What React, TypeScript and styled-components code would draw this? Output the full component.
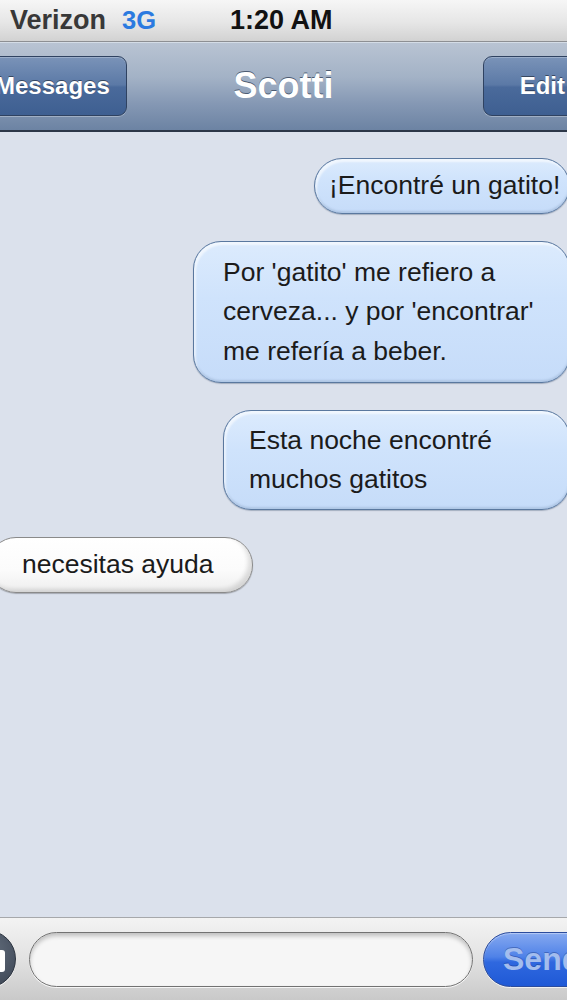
import React from "react";
import styled, { createGlobalStyle } from "styled-components";

const GlobalStyle = createGlobalStyle`
  html, body { margin: 0; padding: 0; }
  body {
    overflow: hidden;
    background: #dbe1ec;
    font-family: "Liberation Sans", Arial, Helvetica, sans-serif;
  }
`;

const Screen = styled.div`
  width: 567px;
  height: 1000px;
  display: flex;
  flex-direction: column;
  overflow: hidden;
  background: #dbe1ec;
`;

const StatusBar = styled.div`
  height: 41px;
  flex: none;
  display: flex;
  align-items: center;
  padding-left: 10px;
  background: linear-gradient(to bottom, #f6f6f6 0%, #e6e6e6 55%, #d2d2d2 100%);
  border-bottom: 1px solid #8d8f93;
  font-weight: bold;
`;

const Carrier = styled.span`
  font-size: 27px;
  color: #383838;
`;

const Network = styled.span`
  font-size: 25.5px;
  color: #2b7ae0;
  margin-left: 16px;
`;

const Clock = styled.span`
  font-size: 27px;
  color: #111;
  margin-left: 74px;
`;

const NavBar = styled.div`
  height: 88px;
  flex: none;
  display: grid;
  grid-template-columns: 1fr auto 1fr;
  align-items: center;
  background: linear-gradient(to bottom, #b9c4d3 0%, #a3b2c6 40%, #8598b4 70%, #6c83a3 100%);
  border-bottom: 2px solid #2c3748;
  box-shadow: inset 0 1px 0 #d4dce6;
`;

const NavButton = styled.div<{ $side: "left" | "right" }>`
  justify-self: ${(p) => (p.$side === "left" ? "start" : "end")};
  margin-left: ${(p) => (p.$side === "left" ? "-24px" : "0")};
  margin-right: ${(p) => (p.$side === "right" ? "-30px" : "0")};
  height: 58px;
  display: flex;
  align-items: center;
  padding: ${(p) => (p.$side === "left" ? "0 16px 0 18px" : "0 31px 0 36px")};
  border: 1px solid #2f4261;
  border-radius: 9px;
  background: linear-gradient(to bottom, #7a93b8 0%, #5b79a6 48%, #4a6a9b 52%, #3e5f91 100%);
  box-shadow: inset 0 1px 0 rgba(255, 255, 255, 0.25), 0 1px 0 rgba(255, 255, 255, 0.3);
  color: #fff;
  font-size: 24px;
  font-weight: bold;
  text-shadow: 0 -1px 0 rgba(0, 0, 0, 0.45);
`;

const Title = styled.div`
  color: #fff;
  font-size: 36px;
  font-weight: bold;
  text-shadow: 0 -1px 0 #4b5b72;
`;

const Conversation = styled.div`
  flex: 1;
  display: flex;
  flex-direction: column;
  gap: 27px;
  padding-top: 26px;
  background: #dbe1ec;
`;

const Bubble = styled.div<{ $mine?: boolean; $width: number; $pl: number; $py: number }>`
  box-sizing: border-box;
  width: ${(p) => p.$width}px;
  align-self: ${(p) => (p.$mine ? "flex-end" : "flex-start")};
  margin-right: ${(p) => (p.$mine ? "-3px" : "0")};
  margin-left: ${(p) => (p.$mine ? "0" : "-12px")};
  padding: ${(p) => `${p.$py}px 8px ${p.$py}px ${p.$pl}px`};
  font-size: 26.5px;
  line-height: 39.5px;
  color: #1b1b1b;
  white-space: nowrap;
  border-radius: 28px;
  border: 1.5px solid ${(p) => (p.$mine ? "#5a789f" : "#8a8a8a")};
  background: ${(p) =>
    p.$mine
      ? "linear-gradient(to bottom, #dcebfd 0%, #cfe3fc 40%, #c6dcf9 100%)"
      : "linear-gradient(to bottom, #ffffff 0%, #fbfbfb 60%, #eeeeee 100%)"};
  box-shadow: ${(p) =>
    p.$mine
      ? "inset 2px 3px 2px rgba(255,255,255,0.6), inset 0 -2px 2px rgba(70,100,140,0.18), 0 1px 1px rgba(40,60,90,0.3)"
      : "inset -4px -3px 4px rgba(0,0,0,0.12), 0 1px 1px rgba(0,0,0,0.25)"};
`;

const Composer = styled.div`
  height: 82px;
  flex: none;
  display: flex;
  align-items: center;
  border-top: 1px solid #a6a8ab;
  background: linear-gradient(to bottom, #f3f3f3 0%, #e2e2e2 50%, #c9c9c9 100%);
`;

const CameraButton = styled.div`
  width: 56px;
  height: 56px;
  flex: none;
  margin-left: -42px;
  border-radius: 50%;
  border: 1px solid #2c3440;
  background: radial-gradient(circle at 50% 35%, #66717f 0%, #4a5463 60%, #39424f 100%);
  box-shadow: 0 1px 0 rgba(255, 255, 255, 0.7);
  display: flex;
  align-items: center;
  justify-content: center;
`;

const Field = styled.div`
  width: 444px;
  height: 55px;
  flex: none;
  box-sizing: border-box;
  margin-left: 13px;
  border-radius: 28px;
  border: 1.5px solid #727272;
  background: #f6f6f6;
  box-shadow: inset 0 3px 4px rgba(0, 0, 0, 0.22), 0 1px 0 rgba(255, 255, 255, 0.8);
`;

const SendButton = styled.div`
  width: 120px;
  height: 55px;
  flex: none;
  box-sizing: border-box;
  margin-left: 10px;
  display: flex;
  align-items: center;
  padding-left: 19px;
  border-radius: 28px;
  border: 1px solid #2c4c9c;
  background: linear-gradient(to bottom, #86a9f0 0%, #4f82e8 45%, #2f68df 55%, #1f59d6 100%);
  box-shadow: inset 0 1px 1px rgba(255, 255, 255, 0.4), 0 1px 0 rgba(255, 255, 255, 0.7);
  color: #a3bdee;
  font-size: 32px;
  font-weight: bold;
  text-shadow: 0 -1px 0 rgba(20, 50, 120, 0.4);
`;

const CameraIcon = () => (
  <svg width="36" height="26" viewBox="0 0 36 26">
    <rect x="0" y="4" width="36" height="22" rx="3" fill="#fff" />
    <rect x="12" y="0" width="12" height="6" rx="2" fill="#fff" />
    <circle cx="18" cy="15" r="6" fill="#4a5463" />
    <circle cx="18" cy="15" r="4" fill="#fff" />
  </svg>
);

export default function App() {
  return (
    <>
      <GlobalStyle />
      <Screen>
        <StatusBar>
          <Carrier>Verizon</Carrier>
          <Network>3G</Network>
          <Clock>1:20 AM</Clock>
        </StatusBar>
        <NavBar>
          <NavButton $side="left">Messages</NavButton>
          <Title>Scotti</Title>
          <NavButton $side="right">Edit</NavButton>
        </NavBar>
        <Conversation>
          <Bubble $mine $width={256} $pl={14} $py={7}>
            ¡Encontré un gatito!
          </Bubble>
          <Bubble $mine $width={377} $pl={29} $py={11}>
            Por 'gatito' me refiero a
            <br />
            cerveza... y por 'encontrar'
            <br />
            me refería a beber.
          </Bubble>
          <Bubble $mine $width={347} $pl={25} $py={9.5}>
            Esta noche encontré
            <br />
            muchos gatitos
          </Bubble>
          <Bubble $width={265} $pl={33} $py={7}>
            necesitas ayuda
          </Bubble>
        </Conversation>
        <Composer>
          <CameraButton>
            <CameraIcon />
          </CameraButton>
          <Field />
          <SendButton>Send</SendButton>
        </Composer>
      </Screen>
    </>
  );
}
